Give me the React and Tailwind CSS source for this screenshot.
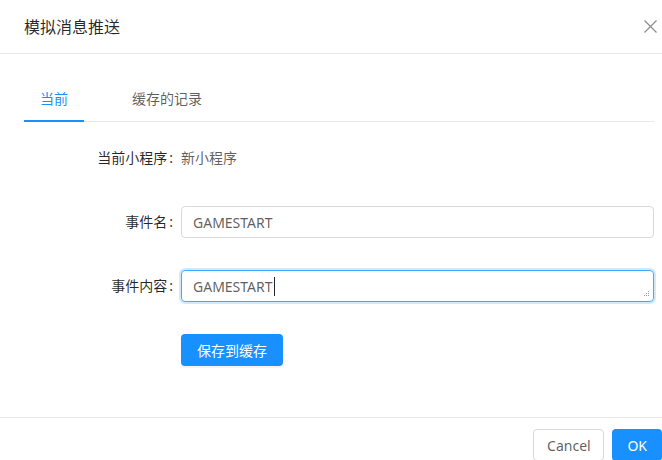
import React from "react";

const font = "font-['Noto_Sans','Noto_Sans_CJK_SC',sans-serif]";

function Label({ children }) {
  return (
    <div className="w-[157px] shrink-0 flex justify-end items-center pr-[8px] text-[14px] leading-[22px] text-black/85">
      <span>{children}</span>
      <span className="ml-[2px]">:</span>
    </div>
  );
}

export default function App() {
  return (
    <div className={`w-[662px] h-[460px] overflow-hidden bg-white ${font}`}>
      <div className="w-[678px] flex flex-col">
        {/* header */}
        <div className="h-[54px] flex items-center justify-between border-b border-[#e8e8e8] pl-[24px]">
          <div className="text-[16px] leading-[22px] text-black/85">模拟消息推送</div>
          <div className="w-[56px] h-[53px] flex items-center justify-center">
            <svg width="13" height="13" viewBox="0 0 13 13" fill="none" stroke="rgba(0,0,0,0.45)" strokeWidth="1.2">
              <path d="M0.5 0.5 L12.5 12.5 M12.5 0.5 L0.5 12.5" />
            </svg>
          </div>
        </div>

        {/* body */}
        <div className="px-[24px] pt-[24px] h-[363px] flex flex-col">
          <div className="flex border-b border-[#e8e8e8] h-[44px]">
            <div className="relative px-[16px] mr-[32px] flex items-center text-[14px] leading-[22px] text-[#1890ff] pb-[1px]">
              当前
              <div className="absolute left-0 right-0 -bottom-[1px] h-[2px] bg-[#1890ff]" />
            </div>
            <div className="px-[16px] flex items-center text-[14px] leading-[22px] text-black/65 pb-[1px]">
              缓存的记录
            </div>
          </div>

          <div className="mt-[20px] flex flex-col gap-[32px]">
            <div className="flex h-[32px] items-center">
              <Label>当前小程序</Label>
              <div className="text-[14px] leading-[22px] text-black/65">新小程序</div>
            </div>
            <div className="flex h-[32px] items-center">
              <Label>事件名</Label>
              <div className="flex-1 h-[32px] border border-[#d9d9d9] rounded-[4px] px-[11px] flex items-center text-[14px] text-black/65">
                GAMESTART
              </div>
            </div>
            <div className="flex h-[32px] items-center">
              <Label>事件内容</Label>
              <div className="relative flex-1 h-[32px] border border-[#40a9ff] rounded-[4px] px-[11px] flex items-center text-[14px] text-black/65 shadow-[0_0_0_2px_rgba(24,144,255,0.2)]">
                <span>GAMESTART</span>
                <span className="inline-block w-px h-[19px] bg-black/85 ml-px" />
                <svg className="absolute right-[3px] bottom-[3px]" width="7" height="7" viewBox="0 0 7 7" fill="#9a9a9a">
                  <rect x="5" y="0" width="1" height="1" />
                  <rect x="3" y="2" width="1" height="1" />
                  <rect x="5" y="2" width="1" height="1" />
                  <rect x="1" y="4" width="1" height="1" />
                  <rect x="3" y="4" width="1" height="1" />
                  <rect x="5" y="4" width="1" height="1" />
                </svg>
              </div>
            </div>
            <div className="flex h-[32px] items-center">
              <div className="w-[157px] shrink-0" />
              <div className="h-[32px] px-[16px] rounded-[4px] bg-[#1890ff] text-white text-[14px] flex items-center shadow-[0_2px_0_rgba(0,0,0,0.045)]">
                保存到缓存
              </div>
            </div>
          </div>
        </div>

        {/* footer */}
        <div className="border-t border-[#e8e8e8] pt-[11px] pr-[16px] flex justify-end gap-[8px]">
          <div className="h-[32px] w-[71px] rounded-[4px] border border-[#d9d9d9] text-black/65 text-[14px] flex items-center justify-center">
            Cancel
          </div>
          <div className="h-[32px] px-[15px] rounded-[4px] bg-[#1890ff] text-white text-[14px] flex items-center">
            OK
          </div>
        </div>
      </div>
    </div>
  );
}
